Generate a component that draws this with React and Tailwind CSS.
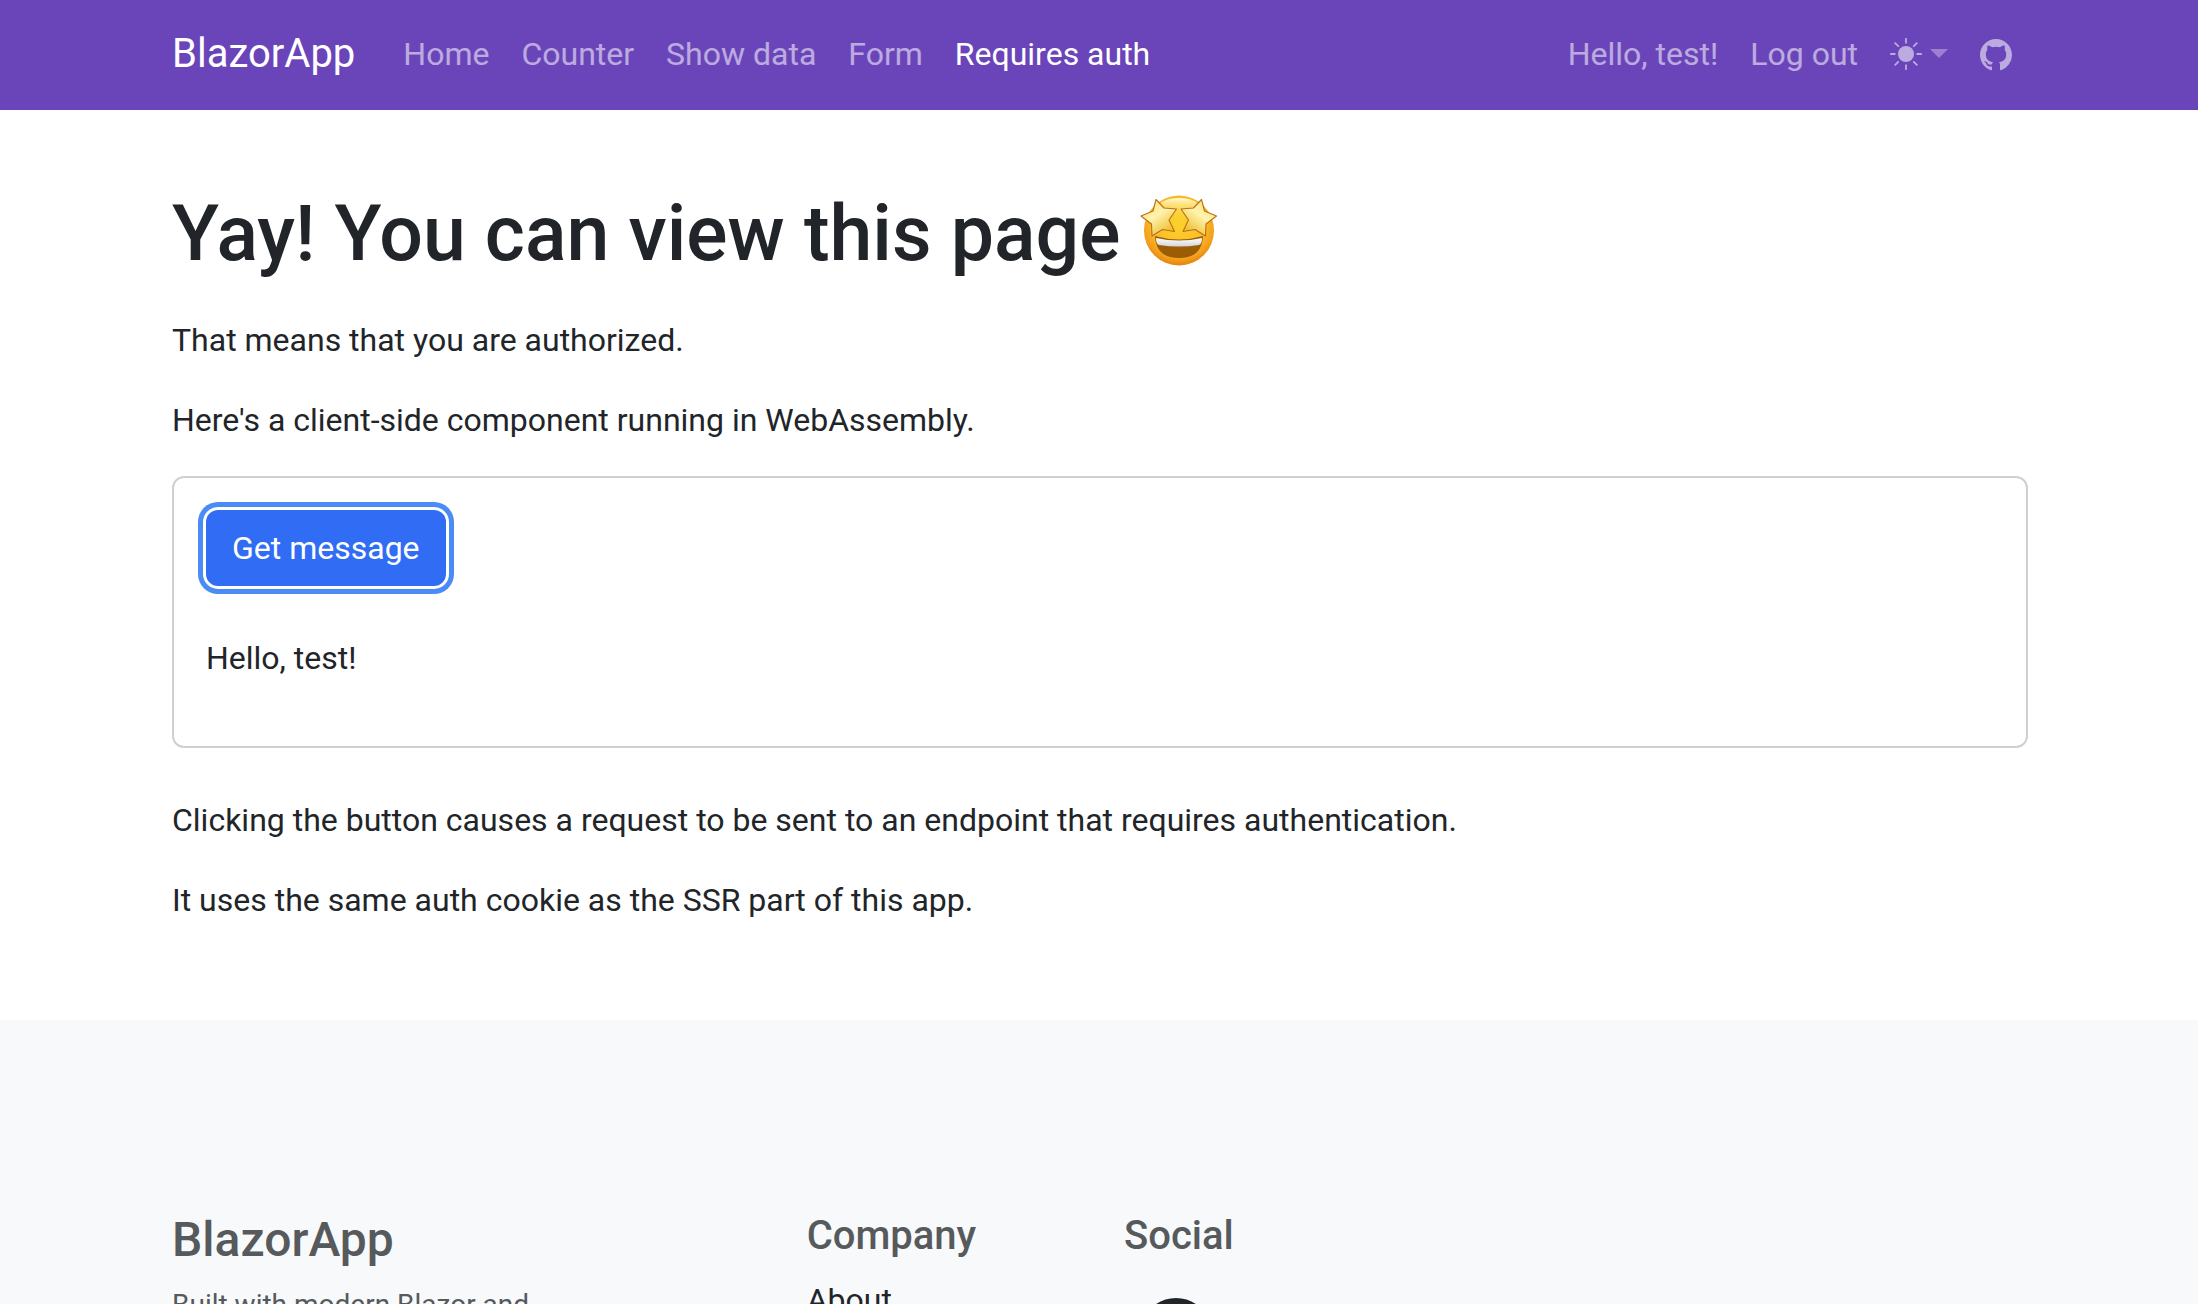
import React from "react";

const navLinks = ["Home", "Counter", "Show data", "Form", "Requires auth"];

const GITHUB_PATH =
  "M8 0C3.58 0 0 3.58 0 8c0 3.54 2.29 6.53 5.47 7.59.4.07.55-.17.55-.38 0-.19-.01-.82-.01-1.49-2.01.37-2.53-.49-2.69-.94-.09-.23-.48-.94-.82-1.13-.28-.15-.68-.52-.01-.53.63-.01 1.08.58 1.23.82.72 1.21 1.87.87 2.33.66.07-.52.28-.87.51-1.07-1.78-.2-3.64-.89-3.64-3.95 0-.87.31-1.59.82-2.15-.08-.2-.36-1.02.08-2.12 0 0 .67-.21 2.2.82.64-.18 1.32-.27 2-.27s1.36.09 2 .27c1.53-1.04 2.2-.82 2.2-.82.44 1.1.16 1.92.08 2.12.51.56.82 1.27.82 2.15 0 3.07-1.87 3.75-3.65 3.95.29.25.54.73.54 1.48 0 1.07-.01 1.93-.01 2.2 0 .21.15.46.55.38A8.01 8.01 0 0 0 16 8c0-4.42-3.58-8-8-8";

function GitHubIcon({ className }) {
  return (
    <svg viewBox="0 0 16 16" fill="currentColor" className={className} aria-hidden="true">
      <path d={GITHUB_PATH} />
    </svg>
  );
}

function SunIcon() {
  return (
    <svg viewBox="0 0 16 16" className="size-8" aria-hidden="true">
      <circle cx="8" cy="8" r="4" fill="currentColor" />
      <path
        d="M8 .4v2M8 13.6v2M.4 8h2M13.6 8h2M2.6 2.6l1.5 1.5M11.9 11.9l1.5 1.5M2.6 13.4l1.5-1.5M11.9 4.1l1.5-1.5"
        stroke="currentColor"
        strokeWidth="0.9"
        strokeLinecap="round"
      />
    </svg>
  );
}

const STAR = "M16 4.5 L24 13 L36.500 14 L29 25 L34.500 36.500 L22.500 34.500 L12 41 L11.500 29 L1 21 L13 16 Z";

function StarStruck() {
  return (
    <svg viewBox="0 0 77 71" className="h-[71px] w-[77px]" role="img" aria-label="Star-struck">
      <defs>
        <radialGradient id="face" cx="50%" cy="40%" r="60%">
          <stop offset="0" stopColor="#fbd22c" />
          <stop offset="0.6" stopColor="#fbbd28" />
          <stop offset="0.85" stopColor="#f3a01c" />
          <stop offset="1" stopColor="#e5820f" />
        </radialGradient>
        <linearGradient id="shine" x1="0" y1="0" x2="0" y2="1">
          <stop offset="0" stopColor="#fffad0" />
          <stop offset="1" stopColor="#ffdc3c" stopOpacity="0" />
        </linearGradient>
        <linearGradient id="star" x1="0" y1="0" x2="0.7" y2="1">
          <stop offset="0" stopColor="#f8dc68" />
          <stop offset="0.5" stopColor="#fff3ae" />
          <stop offset="1" stopColor="#ecba28" />
        </linearGradient>
        <linearGradient id="teeth" x1="0" y1="0" x2="0" y2="1">
          <stop offset="0" stopColor="#ffffff" />
          <stop offset="1" stopColor="#d4d4d8" />
        </linearGradient>
      </defs>
      <circle cx="39" cy="35.5" r="35" fill="url(#face)" />
      <ellipse cx="39" cy="14" rx="22" ry="11" fill="url(#shine)" />
      <path d="M15 41 Q39 48 63 41 Q62 63 39 63 Q16 63 15 41Z" fill="#9a5c04" />
      <path d="M16 43 Q39 48 62 43 Q62 49 59 50 Q39 53 19 50 Q16 49 16 43Z" fill="url(#teeth)" />
      <g fill="url(#star)" stroke="#b87018" strokeWidth="1.1" strokeLinejoin="round">
        <path d={STAR} />
        <path d={STAR} transform="matrix(-1 0 0 1 77.500 0)" />
      </g>
    </svg>
  );
}

export default function App() {
  return (
    <div className="h-screen overflow-hidden bg-white font-['Roboto',sans-serif] text-[32px] leading-[48px] text-[#212529]">
      <header className="bg-[#6a44b9] pt-[14px] pb-4">
        <nav className="mx-auto flex max-w-[1920px] items-center pr-[31px] pl-[33px] text-white/55">
          <a href="#" className="mr-8 text-[40px] leading-[60px] text-white">
            BlazorApp
          </a>
          <ul className="flex flex-1">
            {navLinks.map((label) => (
              <li key={label}>
                <a
                  href="#"
                  className={
                    label === "Requires auth"
                      ? "block px-4 py-4 text-white"
                      : "block px-4 py-4"
                  }
                >
                  {label}
                </a>
              </li>
            ))}
          </ul>
          <span className="px-4">Hello, test!</span>
          <a href="#" className="px-4">
            Log out
          </a>
          <button type="button" aria-label="Toggle theme" className="flex items-center gap-2 px-4">
            <SunIcon />
            <svg viewBox="0 0 18 10" className="h-[10px] w-[18px] opacity-60" aria-hidden="true">
              <path d="M0 0h18L9 9z" fill="currentColor" />
            </svg>
          </button>
          <a href="#" aria-label="GitHub" className="px-4 pt-0.5">
            <GitHubIcon className="size-8" />
          </a>
        </nav>
      </header>

      <main className="mx-auto max-w-[1920px] pt-19 pr-[31px] pb-16 pl-[33px]">
        <h1 className="mb-[34px] flex items-center gap-5 text-[77px] leading-[96px] font-medium">
          Yay! You can view this page
          <span className="pb-2">
            <StarStruck />
          </span>
        </h1>
        <p className="mb-8">That means that you are authorized.</p>
        <p className="mb-8">Here's a client-side component running in WebAssembly.</p>
        <section className="mb-12 rounded-xl border-2 border-[#ced0d2] p-8">
          <button
            type="button"
            className="block rounded-xl bg-[#316cf4] px-[26px] py-[14px] text-white ring-5 ring-[#4a8bf5] ring-offset-3"
          >
            Get message
          </button>
          <p className="mt-12 mb-8">Hello, test!</p>
        </section>
        <p className="mb-8">
          Clicking the button causes a request to be sent to an endpoint that requires authentication.
        </p>
        <p className="mb-8">It uses the same auth cookie as the SSR part of this app.</p>
      </main>

      <footer className="bg-[#f8f9fb] pt-48">
        <div className="mx-auto grid max-w-[1904px] grid-cols-6 text-[#565a5c]">
          <div className="col-span-2 pr-6 pl-[25px]">
            <h3 className="mb-4 text-[48px] leading-[56px] font-medium">BlazorApp</h3>
            <p className="text-[28px] leading-[42px]">
              Built with modern Blazor and
              <br />
              Bootstrap.
            </p>
          </div>
          <div className="pr-6 pl-[25px]">
            <h5 className="mb-4 text-[40px] leading-[48px] font-medium">Company</h5>
            <a href="#" className="text-[#212529]">
              About
            </a>
          </div>
          <div className="pr-6 pl-[25px]">
            <h5 className="mb-4 text-[40px] leading-[48px] font-medium">Social</h5>
            <a href="#" aria-label="GitHub profile" className="block px-4 py-[22px] text-[#212529]">
              <GitHubIcon className="size-[72px]" />
            </a>
          </div>
        </div>
      </footer>
    </div>
  );
}
